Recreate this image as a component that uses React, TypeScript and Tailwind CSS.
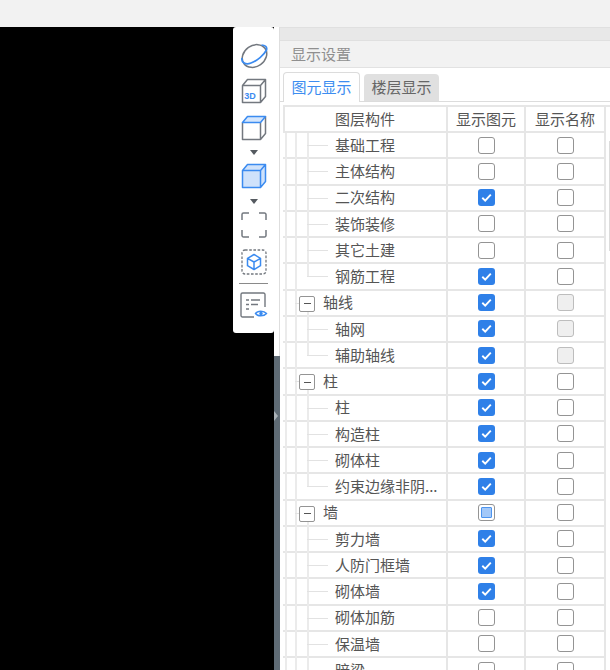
import React from "react";

type Row = { name: string; group?: boolean; last?: boolean; show: "on" | "off" | "mixed"; label?: "off" | "disabled" };

const rows: Row[] = [
  { name: "基础工程", show: "off" },
  { name: "主体结构", show: "off" },
  { name: "二次结构", show: "on" },
  { name: "装饰装修", show: "off" },
  { name: "其它土建", show: "off" },
  { name: "钢筋工程", show: "on", last: true },
  { name: "轴线", group: true, show: "on", label: "disabled" },
  { name: "轴网", show: "on", label: "disabled" },
  { name: "辅助轴线", show: "on", label: "disabled", last: true },
  { name: "柱", group: true, show: "on" },
  { name: "柱", show: "on" },
  { name: "构造柱", show: "on" },
  { name: "砌体柱", show: "on" },
  { name: "约束边缘非阴...", show: "on", last: true },
  { name: "墙", group: true, show: "mixed" },
  { name: "剪力墙", show: "on" },
  { name: "人防门框墙", show: "on" },
  { name: "砌体墙", show: "on" },
  { name: "砌体加筋", show: "off" },
  { name: "保温墙", show: "off" },
  { name: "暗梁", show: "off" },
];

function Check({ state }: { state: "on" | "off" | "mixed" | "disabled" }) {
  if (state === "on") {
    return (
      <span className="flex h-[17px] w-[17px] items-center justify-center rounded-[3px] bg-[#2f80e8]">
        <svg width="13" height="13" viewBox="0 0 13 13" fill="none">
          <path d="M2.3 6.8 5.2 9.6 10.8 3.6" stroke="#ffffff" strokeWidth="1.9" />
        </svg>
      </span>
    );
  }
  if (state === "mixed") {
    return (
      <span className="flex h-[17px] w-[17px] items-center justify-center rounded-[3px] border border-[#949494] bg-white">
        <span className="h-[11px] w-[11px] rounded-[1px] border border-[#4d94ee] bg-[#a3c8f8]" />
      </span>
    );
  }
  return (
    <span
      className={
        state === "disabled"
          ? "h-[17px] w-[17px] rounded-[3px] border border-[#bdbdbd] bg-[#efefef]"
          : "h-[17px] w-[17px] rounded-[3px] border border-[#949494] bg-white"
      }
    />
  );
}

function TreeCell({ row }: { row: Row }) {
  return (
    <div className="relative flex h-full items-center border-r-2 border-[#e6e6e6] text-[15px]">
      <span className="absolute bottom-[-2px] left-[2px] top-0 w-[2px] bg-[#ebebeb]" />
      <span className="absolute bottom-[-2px] left-[12px] top-0 w-[2px] bg-[#ebebeb]" />
      {row.group ? (
        <>
          <span className="absolute left-[12px] top-1/2 h-px w-[5px] bg-[#e2e2e2]" />
          <span className="absolute bottom-[-2px] left-[24px] top-1/2 w-[2px] bg-[#ebebeb]" />
          <span className="absolute left-[16px] top-[5px] flex h-[16px] w-[16px] items-center justify-center rounded-[2px] border border-[#949494] bg-white">
            <span className="h-px w-[7px] bg-[#555555]" />
          </span>
          <span className="pl-[40px]">{row.name}</span>
        </>
      ) : (
        <>
          <span className={row.last ? "absolute left-[24px] top-0 h-1/2 w-[2px] bg-[#ebebeb]" : "absolute bottom-[-2px] left-[24px] top-0 w-[2px] bg-[#ebebeb]"} />
          <span className="absolute left-[24px] top-1/2 h-px w-[21px] bg-[#e2e2e2]" />
          <span className="pl-[52px]">{row.name}</span>
        </>
      )}
    </div>
  );
}

function Toolbar() {
  const gray = "#73787f";
  const blue = "#3b8bf0";
  return (
    <div className="absolute left-[233px] top-[27px] flex h-[306px] w-[41px] flex-col items-center rounded-[3px] bg-white pt-[16px]">
      <svg width="28" height="26" viewBox="0 0 28 26" fill="none">
        <ellipse cx="14.500" cy="13" rx="13" ry="10.500" transform="rotate(-35 14.500 13)" stroke={gray} strokeWidth="1.500" />
        <path d="M2 15C1 20 6 22 11 20 17 18 24 12 26.500 7 27.500 4 25 2 21.500 2" stroke={blue} strokeWidth="1.700" />
      </svg>
      <svg className="mt-[9px]" width="26" height="26" viewBox="0 0 26 26" fill="none">
        <path d="M1.500 7.500h18v17h-18zM1.500 7.500l5-6h18v17l-5 6M19.500 7.500l5-6" stroke={gray} strokeWidth="1.500" strokeLinejoin="round" />
        <text x="3.200" y="21" fontSize="9" fontWeight="700" fill={blue} fontFamily="Liberation Sans, sans-serif">3D</text>
      </svg>
      <svg className="mt-[11px]" width="26" height="26" viewBox="0 0 26 26" fill="none">
        <path d="M1.500 7.500v17h18v-17M24.500 1.500v17l-5 6" stroke={gray} strokeWidth="1.500" strokeLinejoin="round" />
        <path d="M1.500 7.500l5-6h18l-5 6z" stroke={blue} strokeWidth="1.500" fill="#d5e6fc" strokeLinejoin="round" />
      </svg>
      <span className="mt-[9px] h-0 w-0 border-x-[4px] border-t-[5px] border-x-transparent border-t-[#555a60]" />
      <svg className="mt-[8px]" width="26" height="26" viewBox="0 0 26 26" fill="#cfe2fb">
        <path d="M1.500 7.500l5-6h18v17l-5 6h-18zM1.500 7.500h18v17M19.500 7.500l5-6" stroke={blue} strokeWidth="1.500" strokeLinejoin="round" />
      </svg>
      <span className="mt-[10px] h-0 w-0 border-x-[4px] border-t-[5px] border-x-transparent border-t-[#555a60]" />
      <svg className="mt-[8px]" width="26" height="26" viewBox="0 0 26 26" fill="none">
        <path d="M1 8V2.500a1.500 1.500 0 0 1 1.500-1.500H8M18 1h5.500A1.500 1.500 0 0 1 25 2.500V8M25 18v5.500a1.500 1.500 0 0 1-1.500 1.500H18M8 25H2.500A1.500 1.500 0 0 1 1 23.500V18" stroke={gray} strokeWidth="1.500" />
      </svg>
      <svg className="mt-[11px]" width="26" height="26" viewBox="0 0 26 26" fill="none">
        <rect x="1" y="1" width="24" height="24" rx="3" stroke={gray} strokeWidth="1.300" strokeDasharray="2.600 1.600" />
        <path d="M13 5.500 19.500 9.300v7.400L13 20.500l-6.500-3.800V9.300zM6.500 9.300 13 13l6.500-3.700M13 13v7.500" stroke={blue} strokeWidth="1.500" strokeLinejoin="round" />
      </svg>
      <span className="mt-[8px] h-px w-[29px] shrink-0 bg-[#8a8a8a]" />
      <svg className="mt-[8px]" width="28" height="27" viewBox="0 0 28 27" fill="none">
        <path d="M14 25H2.500A1.500 1.500 0 0 1 1 23.500V2.500A1.500 1.500 0 0 1 2.500 1h21A1.500 1.500 0 0 1 25 2.500V15" stroke={gray} strokeWidth="1.400" />
        <path d="M6 8h3M11 8h9M6 12.500h3M11 12.500h7M6 17h3" stroke={gray} strokeWidth="1.400" />
        <path d="M15.500 21.500c2-3 8.500-3 11 0-2.500 3-9 3-11 0z" fill="#ffffff" stroke={blue} strokeWidth="1.400" />
        <circle cx="21" cy="21.500" r="1.700" fill={blue} />
      </svg>
    </div>
  );
}

export default function App() {
  return (
    <div className="relative flex h-[670px] w-[610px] flex-col overflow-hidden bg-white font-['Noto_Sans_CJK_SC','Noto_Sans',sans-serif] text-[#555555]">
      <div className="h-[27px] shrink-0 bg-[#f2f2f2]" />
      <div className="flex min-h-0 flex-1">
        <div className="w-[274px] shrink-0 bg-black" />
        <div className="flex w-[6px] shrink-0 flex-col bg-white">
          <div className="h-[329px] shrink-0 border-r border-[#dedede]" />
          <div className="relative flex-1 bg-[#5f6b75]">
            <span className="absolute left-0 top-[55px] h-0 w-0 border-y-[5px] border-l-[4px] border-y-transparent border-l-[#aab2b8]" />
          </div>
        </div>
        <div className="flex min-w-0 flex-1 flex-col">
          <div className="h-[14px] shrink-0 border-y border-[#e0e0e0] bg-[#e8e8e8]" />
          <div className="flex h-[27px] shrink-0 items-center border-b border-[#e2e2e2] bg-[#f2f2f2] pl-[11px] text-[15px] text-[#8f8f8f]">
            显示设置
          </div>
          <div className="flex h-[34px] shrink-0 items-end gap-[4px] border-b border-[#dcdcdc] pl-[3px]">
            <div className="relative -mb-px flex h-[30px] w-[77px] items-center justify-center rounded-t-[4px] border border-b-0 border-[#dcdcdc] bg-white text-[15px] text-[#3d8df0]">
              图元显示
            </div>
            <div className="flex h-[27px] w-[75px] items-center justify-center rounded-t-[4px] bg-[#e0e0e0] text-[15px] text-[#666666]">
              楼层显示
            </div>
          </div>
          <div className="mt-[3px] ml-[3px] flex items-start border-t-2 border-[#e6e6e6]">
            <div className="w-[323px] shrink-0">
              <div className="grid h-[26px] grid-cols-[165px_78px_80px] border-b-2 border-[#e6e6e6] text-[15px]">
                <div className="flex items-center border-x-2 border-[#e6e6e6] pl-[50px]">图层构件</div>
                <div className="flex items-center justify-center border-r-2 border-[#e6e6e6]">显示图元</div>
                <div className="flex items-center justify-center border-r-2 border-[#e6e6e6]">显示名称</div>
              </div>
              {rows.map((row, i) => (
                <div key={i} className="grid h-[26.25px] grid-cols-[165px_78px_80px] border-b-2 border-[#e6e6e6]">
                  <TreeCell row={row} />
                  <div className="flex items-center justify-center border-r-2 border-[#e6e6e6]">
                    <Check state={row.show} />
                  </div>
                  <div className="flex items-center justify-center border-r-2 border-[#e6e6e6]">
                    <Check state={row.label === "disabled" ? "disabled" : "off"} />
                  </div>
                </div>
              ))}
            </div>
            <div className="ml-[3px] mt-[34px] h-[110px] w-px shrink-0 bg-[#dcdcdc]" />
          </div>
        </div>
      </div>
      <Toolbar />
    </div>
  );
}
